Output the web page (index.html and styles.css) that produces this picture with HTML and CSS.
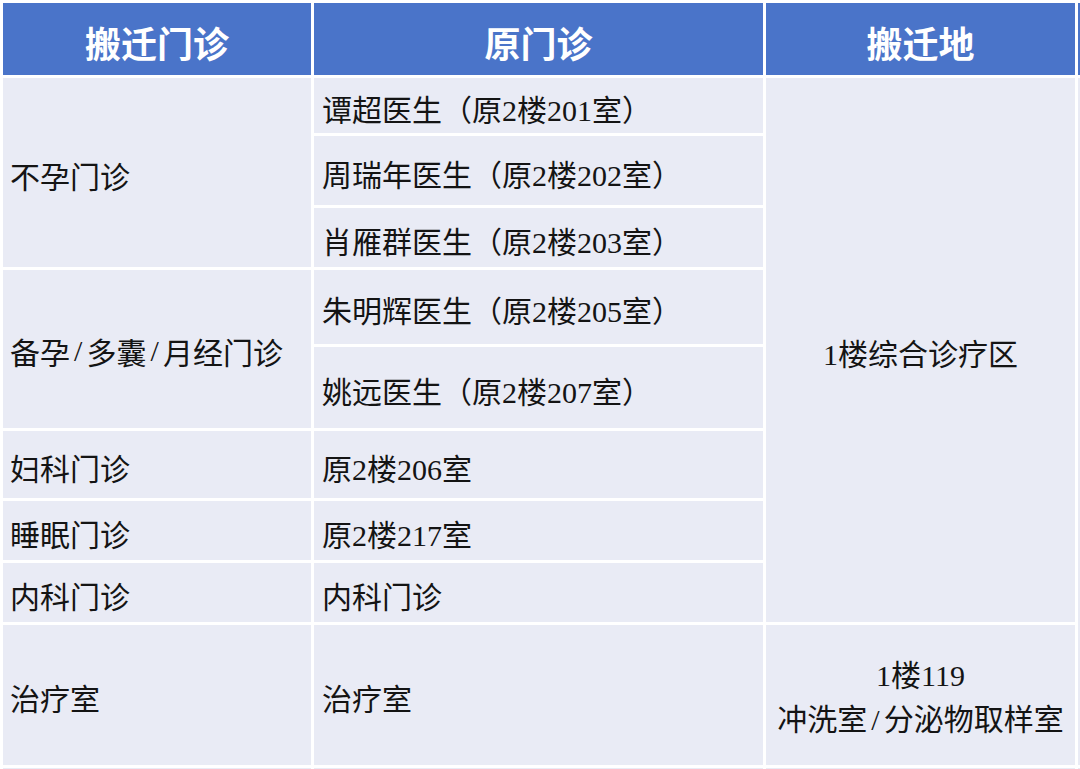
FILE: index.html
```html
<!DOCTYPE html>
<html lang="zh-CN">
<head>
<meta charset="utf-8">
<title>门诊搬迁</title>
<link rel="stylesheet" href="styles.css">
</head>
<body>
<div class="table">
  <div class="cell head">搬迁门诊</div>
  <div class="cell head">原门诊</div>
  <div class="cell head">搬迁地</div>
  <div class="cell head edge"></div>

  <div class="cell c1 span-3">不孕门诊</div>
  <div class="cell c2">谭超医生（原2楼201室）</div>
  <div class="cell c3 span-8">1楼综合诊疗区</div>
  <div class="cell edge span-9"></div>
  <div class="cell c2">周瑞年医生（原2楼202室）</div>
  <div class="cell c2">肖雁群医生（原2楼203室）</div>

  <div class="cell c1 span-2">备孕<span class="sl">/</span>多囊<span class="sl">/</span>月经门诊</div>
  <div class="cell c2">朱明辉医生（原2楼205室）</div>
  <div class="cell c2">姚远医生（原2楼207室）</div>

  <div class="cell c1">妇科门诊</div>
  <div class="cell c2">原2楼206室</div>

  <div class="cell c1">睡眠门诊</div>
  <div class="cell c2">原2楼217室</div>

  <div class="cell c1">内科门诊</div>
  <div class="cell c2">内科门诊</div>

  <div class="cell c1">治疗室</div>
  <div class="cell c2">治疗室</div>
  <div class="cell c3 two-line"><span>1楼119</span><span>冲洗室<span class="sl">/</span>分泌物取样室</span></div>

  <div class="cell"></div>
  <div class="cell"></div>
  <div class="cell"></div>
  <div class="cell edge"></div>
</div>
</body>
</html>
```
FILE: styles.css
```css
html, body {
  margin: 0;
  padding: 0;
  background: #ffffff;
  overflow: hidden;
}

.table {
  display: grid;
  grid-template-columns: 308px 449px 309px 40px;
  grid-template-rows: 72px 55px 69px 59px 74px 81px 67px 59px 59px 140px 20px;
  gap: 3px;
  padding: 3px;
  font-family: "Liberation Serif", "Noto Sans CJK SC", serif;
  font-size: 30px;
  color: #141414;
}

.cell {
  background: #e9ebf5;
  display: flex;
  align-items: center;
  padding-top: 4px;
  box-sizing: border-box;
  white-space: nowrap;
  overflow: hidden;
}

.head {
  background: #4a74c9;
  color: #ffffff;
  font-size: 36px;
  font-weight: bold;
  justify-content: center;
  padding-top: 6px;
}

.head.edge {
  background: #4a74c9;
}

.c1 {
  padding-left: 7px;
}

.c2 {
  padding-left: 8px;
}

.c3 {
  justify-content: center;
  text-align: center;
}

.span-2 { grid-row: span 2; }
.span-3 { grid-row: span 3; }
.span-8 { grid-row: span 8; }
.span-9 { grid-row: span 9; }

.sl {
  display: inline-block;
  width: 0.55em;
  text-align: center;
}

.two-line {
  flex-direction: column;
  line-height: 44px;
  padding-top: 6px;
}
```
